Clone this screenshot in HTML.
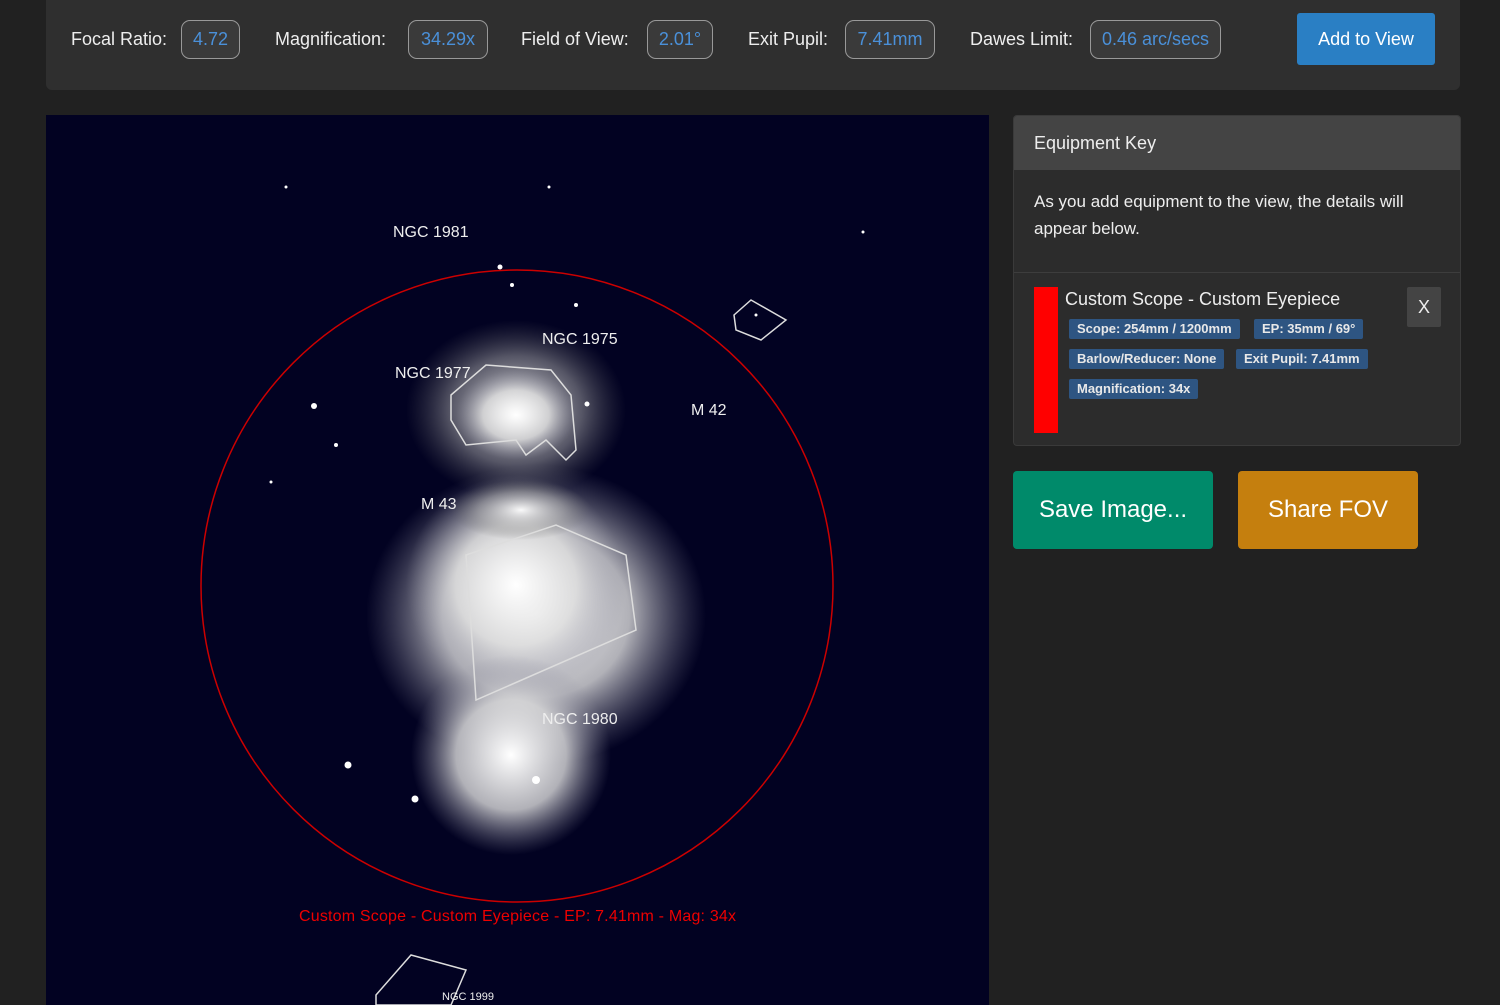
<!DOCTYPE html>
<html><head><style>
body{margin:0;width:1500px;height:1005px;background:#212121;font-family:"Liberation Sans",sans-serif;position:relative;overflow:hidden;color:#eee}
.bar{position:absolute;left:46px;top:-10px;width:1414px;height:100px;background:#2f2f2f;border-radius:6px}
.lbl{position:absolute;top:29px;font-size:18px;color:#eee}
.val{position:absolute;top:20px;height:37px;border:1px solid #999;border-radius:9px;background:#3a3a3a;color:#4a90d9;font-size:18px;line-height:37px;text-align:center}
.add{position:absolute;left:1297px;top:13px;width:138px;height:52px;background:#2a7fc4;border-radius:3px;color:#fff;font-size:18px;line-height:52px;text-align:center}
.card{position:absolute;left:1013px;top:115px;width:446px;height:329px;background:#2c2c2c;border:1px solid #3a3a3a;border-radius:4px;overflow:hidden}
.ch{height:54px;background:#444;font-size:18px;line-height:54px;padding-left:20px}
.tag{position:absolute;height:20px;background:#2e5582;color:#e8e8e8;font-size:13px;font-weight:bold;line-height:20px;padding:0 8px;border-radius:2px}
.btn{position:absolute;top:471px;height:78px;border-radius:4px;color:#fff;font-size:24px;line-height:78px;text-align:center}
</style></head><body>
<div class="bar"></div>
<div class="lbl" style="left:71px">Focal Ratio:</div><div class="val" style="left:181px;width:57px">4.72</div>
<div class="lbl" style="left:275px">Magnification:</div><div class="val" style="left:408px;width:78px">34.29x</div>
<div class="lbl" style="left:521px">Field of View:</div><div class="val" style="left:647px;width:64px">2.01°</div>
<div class="lbl" style="left:748px">Exit Pupil:</div><div class="val" style="left:845px;width:88px">7.41mm</div>
<div class="lbl" style="left:970px">Dawes Limit:</div><div class="val" style="left:1090px;width:129px">0.46 arc/secs</div>
<div class="add">Add to View</div>

<svg style="position:absolute;left:46px;top:115px" width="943" height="890">
<defs>
<radialGradient id="g1"><stop offset="0" stop-color="#fff" stop-opacity="1"/><stop offset=".55" stop-color="#ddd" stop-opacity=".8"/><stop offset="1" stop-color="#889" stop-opacity="0"/></radialGradient>
<radialGradient id="g2"><stop offset="0" stop-color="#fff" stop-opacity=".95"/><stop offset=".6" stop-color="#aaa" stop-opacity=".5"/><stop offset="1" stop-color="#666" stop-opacity="0"/></radialGradient>
</defs>
<rect width="943" height="890" fill="#020222"/>
<ellipse cx="490" cy="500" rx="170" ry="150" fill="url(#g1)"/>
<ellipse cx="470" cy="470" rx="110" ry="110" fill="url(#g1)"/>
<ellipse cx="465" cy="640" rx="100" ry="100" fill="url(#g1)"/>
<ellipse cx="470" cy="295" rx="110" ry="90" fill="url(#g2)"/>
<ellipse cx="470" cy="300" rx="60" ry="45" fill="url(#g1)"/>
<ellipse cx="475" cy="395" rx="70" ry="30" fill="url(#g2)"/>
<path d="M405 280 L440 250 L505 255 L525 280 L530 335 L520 345 L500 325 L480 340 L470 325 L420 330 L405 305Z" fill="none" stroke="#ddd" stroke-width="1.5"/>
<path d="M420 440 L510 410 L580 440 L590 515 L430 585 L425 510Z" fill="none" stroke="#ddd" stroke-width="1.5"/>
<path d="M688 200 L705 185 L740 205 L715 225 L690 215Z" fill="none" stroke="#ddd" stroke-width="1.5"/>
<path d="M330 880 L365 840 L420 855 L405 890 L330 890Z" fill="none" stroke="#ddd" stroke-width="1.5"/>
<circle cx="471" cy="471" r="316" fill="none" stroke="#c00" stroke-width="1.5"/>
<g fill="#eee" font-family="Liberation Sans" font-size="16">
<text x="347" y="122">NGC 1981</text><text x="496" y="229">NGC 1975</text><text x="349" y="263">NGC 1977</text><text x="645" y="300">M 42</text><text x="375" y="394">M 43</text><text x="496" y="609">NGC 1980</text><text x="396" y="885" font-size="11">NGC 1999</text>
</g>
<text x="253" y="806" fill="#e00" font-family="Liberation Sans" font-size="16" textLength="437">Custom Scope - Custom Eyepiece - EP: 7.41mm - Mag: 34x</text>
<g fill="#fff"><circle cx="268" cy="291" r="3"/><circle cx="290" cy="330" r="2"/><circle cx="541" cy="289" r="2.5"/><circle cx="302" cy="650" r="3.5"/><circle cx="369" cy="684" r="3.5"/><circle cx="454" cy="152" r="2.5"/><circle cx="466" cy="170" r="2"/><circle cx="240" cy="72" r="1.5"/><circle cx="817" cy="117" r="1.5"/><circle cx="503" cy="72" r="1.5"/><circle cx="225" cy="367" r="1.5"/><circle cx="490" cy="665" r="4"/><circle cx="530" cy="190" r="2"/><circle cx="710" cy="200" r="1.5"/></g>
</svg>

<div class="card">
<div class="ch">Equipment Key</div>
<div style="padding:18px 20px 0;font-size:17px;line-height:27px;height:84px;border-bottom:1px solid #3d3d3d">As you add equipment to the view, the details will appear below.</div>
<div style="position:absolute;left:20px;top:171px;width:24px;height:146px;background:#f00"></div>
<div style="position:absolute;left:51px;top:173px;font-size:18px">Custom Scope - Custom Eyepiece</div>
<div style="position:absolute;left:393px;top:171px;width:34px;height:40px;background:#444;border-radius:2px;text-align:center;line-height:40px;font-size:18px">X</div>
<div class="tag" style="left:55px;top:203px">Scope: 254mm / 1200mm</div>
<div class="tag" style="left:240px;top:203px">EP: 35mm / 69°</div>
<div class="tag" style="left:55px;top:233px">Barlow/Reducer: None</div>
<div class="tag" style="left:222px;top:233px">Exit Pupil: 7.41mm</div>
<div class="tag" style="left:55px;top:263px">Magnification: 34x</div>
</div>
<div class="btn" style="left:1013px;width:200px;background:#008a6a">Save Image...</div>
<div class="btn" style="left:1238px;width:180px;background:#c57f0e">Share FOV</div>
</body></html>
